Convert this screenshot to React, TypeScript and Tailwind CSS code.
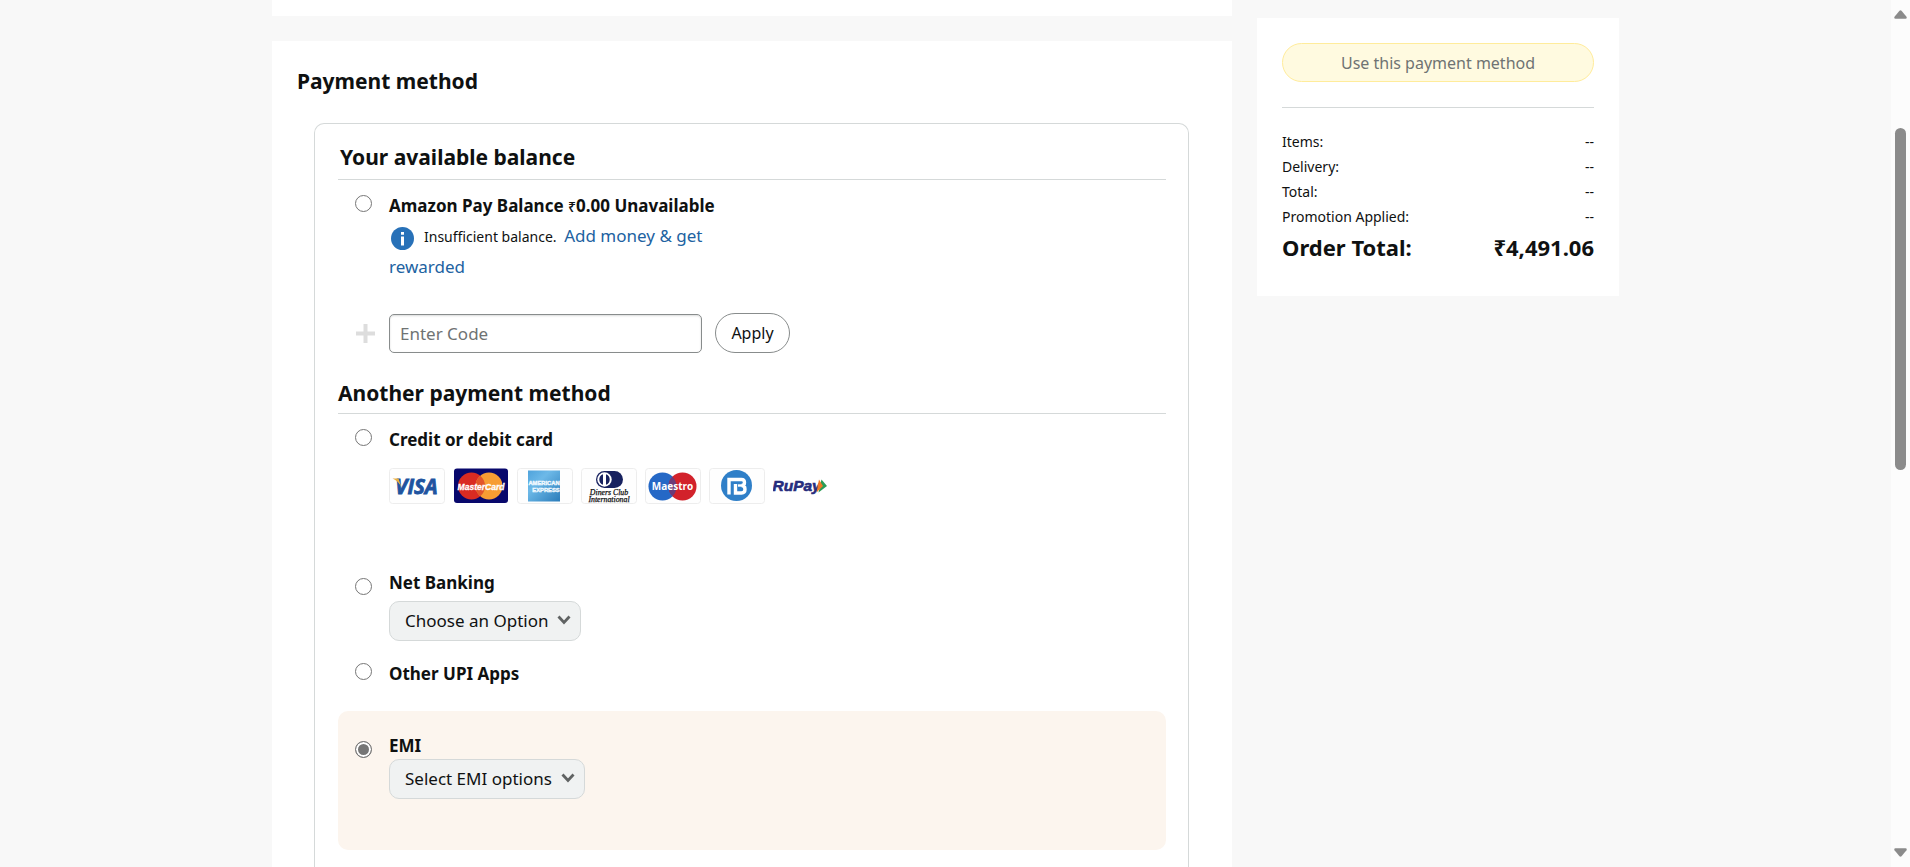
import type { ReactNode } from "react";

const summaryRows = ["Items:", "Delivery:", "Total:", "Promotion Applied:"];

type OptionProps = {
  id: string;
  label: ReactNode;
  checked?: boolean;
  radioClass: string;
  className: string;
  children?: ReactNode;
};

function Option({ id, label, checked = false, radioClass, className, children }: OptionProps) {
  return (
    <div className={"flex items-start pl-[17px] " + className}>
      <div className={"flex w-[34px] shrink-0 " + radioClass}>
        <input
          id={id}
          type="radio"
          name="payment"
          defaultChecked={checked}
          className="m-0 size-[17px] appearance-none rounded-full border border-[#767676] bg-white checked:bg-[#767676] checked:shadow-[inset_0_0_0_2px_white]"
        />
      </div>
      <div className="min-w-0 flex-1">
        <label htmlFor={id} className="block pt-0.5 text-[17px] leading-[22px] font-bold">
          {label}
        </label>
        {children}
      </div>
    </div>
  );
}

function Dropdown({ id, label, option, className }: { id: string; label: string; option: string; className: string }) {
  return (
    <div className={"relative h-10 " + className}>
      <select
        id={id}
        aria-label={label}
        className="h-10 w-full appearance-none rounded-[10px] border border-[#d5d9d9] bg-[#f0f2f2] pr-8 pl-[15px] text-[17px] text-[#0f1111]"
      >
        <option>{option}</option>
      </select>
      <svg
        viewBox="0 0 14 10"
        className="pointer-events-none absolute top-[14px] right-[10px] h-[10px] w-[14px]"
        aria-hidden="true"
      >
        <path d="M1.500 1.500L7 7.400l5.500-5.900" fill="none" stroke="#606363" strokeWidth="2.800" />
      </svg>
    </div>
  );
}

function CardFrame({ name, framed = true, children }: { name: string; framed?: boolean; children: ReactNode }) {
  return (
    <svg viewBox="0 0 56 36" className="h-9 w-14" role="img" aria-label={name}>
      {framed && <rect x=".5" y=".5" width="55" height="35" rx="3" fill="#fefefe" stroke="#ededed" />}
      {children}
    </svg>
  );
}

function CardLogos() {
  return (
    <div className="mt-[17px] flex gap-2">
      <CardFrame name="Visa">
        <text x="27.500" y="25.500" textAnchor="middle" fontFamily="Open Sans, sans-serif" fontSize="20.500" fontWeight="700" fontStyle="italic" fill="#20539f" stroke="#20539f" strokeWidth=".8">
          VISA
        </text>
        <path d="M3.500 10.500h6l3 9C10.500 15 7.500 12.500 3.500 10.500z" fill="#e8ae3f" />
      </CardFrame>
      <CardFrame name="MasterCard" framed={false}>
        <rect x="1" y=".5" width="54" height="34.500" rx="3" fill="#08086c" />
        <circle cx="18.500" cy="18" r="13.500" fill="#d92b22" />
        <circle cx="36" cy="18" r="13.500" fill="#f79d33" />
        <path d="M27.250 7.700a13.500 13.500 0 0 1 0 20.600 13.500 13.500 0 0 1 0-20.600z" fill="#e2552a" />
        <text x="28" y="21.500" textAnchor="middle" fontFamily="Liberation Sans, sans-serif" fontSize="8.500" fontWeight="700" fontStyle="italic" fill="#fff" stroke="#fff" strokeWidth=".3">
          MasterCard
        </text>
      </CardFrame>
      <CardFrame name="American Express">
        <defs>
          <linearGradient id="amex" x1="0" y1="0" x2="1" y2="1">
            <stop offset="0" stopColor="#4fa3dc" />
            <stop offset=".35" stopColor="#6db9e8" />
            <stop offset="1" stopColor="#2a7cba" />
          </linearGradient>
        </defs>
        <rect x="11" y="2.500" width="32" height="31" fill="url(#amex)" />
        <text x="27" y="17" textAnchor="middle" fontFamily="Liberation Sans, sans-serif" fontSize="5.800" fontWeight="700" fill="#f1f9ff" stroke="#f1f9ff" strokeWidth=".4">
          AMERICAN
        </text>
        <text x="29" y="24" textAnchor="middle" fontFamily="Liberation Sans, sans-serif" fontSize="5.800" fontWeight="700" fill="#f1f9ff" stroke="#f1f9ff" strokeWidth=".4">
          EXPRESS
        </text>
      </CardFrame>
      <CardFrame name="Diners Club International">
        <rect x="15" y="3" width="27" height="17" rx="8.500" fill="#17215f" />
        <circle cx="23.500" cy="11.500" r="7.200" fill="#fff" />
        <path d="M22 6.300a5.500 5.500 0 0 0 0 10.400zM25 6.300a5.500 5.500 0 0 1 0 10.400z" fill="#17215f" />
        <text x="28" y="27" textAnchor="middle" fontFamily="Liberation Serif, serif" fontSize="7.800" fontStyle="italic" fill="#111" stroke="#111" strokeWidth=".25">
          Diners Club
        </text>
        <text x="28" y="33.500" textAnchor="middle" fontFamily="Liberation Serif, serif" fontSize="7.800" fontStyle="italic" fill="#111" stroke="#111" strokeWidth=".25">
          International
        </text>
      </CardFrame>
      <CardFrame name="Maestro">
        <circle cx="17.500" cy="18.500" r="14" fill="#2568c6" />
        <circle cx="37.500" cy="18.500" r="14" fill="#d2222b" />
        <path d="M27.500 8.700a14 14 0 0 1 0 19.600 14 14 0 0 1 0-19.600z" fill="#6c3a78" />
        <text x="27.500" y="22" textAnchor="middle" fontFamily="Open Sans, sans-serif" fontSize="10" fontWeight="700" fill="#fff">
          Maestro
        </text>
      </CardFrame>
      <CardFrame name="BHIM">
        <circle cx="27.500" cy="17.500" r="15.500" fill="#2f7fc8" />
        <path
          d="M20 26.500V11.500H32.500q3 0 3 3T32.500 17.500q3.500 0 3.500 3.700T32.500 25H26.500V16"
          fill="none"
          stroke="#fff"
          strokeWidth="3.400"
        />
        <path d="M29 17.500h4" stroke="#fff" strokeWidth="2.400" />
      </CardFrame>
      <CardFrame name="RuPay" framed={false}>
        <text x="-.500" y="23" fontFamily="Liberation Sans, sans-serif" fontSize="15.500" fontWeight="700" fontStyle="italic" fill="#262d7d" stroke="#262d7d" strokeWidth=".6">
          RuPay
        </text>
        <path d="M48.500 11.500l5.500 6.500-8.500 6.500z" fill="#2a9d56" />
        <path d="M46 11.500l4 6.500-6.500 6.500z" fill="#f07a26" />
      </CardFrame>
    </div>
  );
}

function ScrollRail() {
  return (
    <div className="flex w-[19px] shrink-0 flex-col items-center bg-[#fcfcfc] py-[10px]" aria-hidden="true">
      <svg viewBox="0 0 13 9" className="h-[9px] w-[13px]">
        <path d="M5.500 .8q1-.9 2 0l5 6q.8 1.800-1 2h-10q-1.800-.2-1-2z" fill="#8b8b8b" />
      </svg>
      <div className="mt-[109px] h-[342px] w-[11px] rounded-full bg-[#8b8b8b]" />
      <svg viewBox="0 0 13 9" className="mt-auto h-[9px] w-[13px]">
        <path d="M5.500 8.200q1 .9 2 0l5-6q.8-1.800-1-2h-10q-1.800.2-1 2z" fill="#8b8b8b" />
      </svg>
    </div>
  );
}

export default function App() {
  return (
    <div className="flex min-h-screen bg-[#f8f8f8] font-['Noto_Sans',sans-serif] text-[#0f1111]">
      <main className="mx-auto flex w-full max-w-[1347px] gap-[25px]">
        <div className="flex min-w-0 flex-1 flex-col gap-[25px]">
          <div className="h-4 bg-white" />
          <section className="flex flex-1 flex-col bg-white pr-[43px] pl-[42px]">
            <h1 className="-ml-[17px] pt-[26px] pb-7 text-[21px] leading-7 font-bold">Payment method</h1>
            <div className="flex-1 rounded-t-[10px] border border-b-0 border-[#d5d9d9] pr-[22px] pl-[23px]">
              <h2 className="px-0.5 pt-[19px] pb-2 text-[21px] leading-7 font-bold">Your available balance</h2>
              <hr className="border-[#d5d9d9]" />
              <Option
                id="pay-balance"
                className="pt-[13px]"
                radioClass="pt-0.5"
                label={
                  <>
                    Amazon Pay Balance <span className="text-[14px] leading-none font-medium">₹</span>0.00 Unavailable
                  </>
                }
              >
                <p className="mt-1 w-80 text-[14px] leading-[30px]">
                  <svg viewBox="0 0 23 23" className="mr-[10px] ml-0.5 inline-block size-[23px]" aria-hidden="true">
                    <circle cx="11.500" cy="11.500" r="11.500" fill="#2871b8" />
                    <path d="M10 9.500h3v9h-3zM10 5h3v2.800h-3z" fill="#fff" />
                  </svg>
                  Insufficient balance.{" "}
                  <a href="#add-money" className="ml-1 text-[17px] text-[#2162a1]">
                    Add money &amp; get rewarded
                  </a>
                </p>
              </Option>
              <form className="mt-[30px] flex h-10 items-center pl-[18px]" onSubmit={(e) => e.preventDefault()}>
                <div className="w-[33px] shrink-0">
                  <svg viewBox="0 0 19 19" className="size-[19px]" aria-hidden="true">
                    <path d="M9.500 0v19M0 9.500h19" stroke="#dddddd" strokeWidth="4" />
                  </svg>
                </div>
                <input
                  type="text"
                  aria-label="Enter Code"
                  placeholder="Enter Code"
                  className="h-[39px] w-[313px] rounded-[5px] border border-[#888c8c] bg-white px-[10px] text-[17px] shadow-[inset_0_1px_2px_rgba(15,17,17,0.15)] placeholder:text-[#6f7373]"
                />
                <button type="submit" className="ml-[13px] h-10 w-[75px] rounded-full border border-[#888c8c] bg-white text-[16px]">
                  Apply
                </button>
              </form>
              <h2 className="pt-[26px] pb-[6px] text-[21px] leading-7 font-bold">Another payment method</h2>
              <hr className="border-[#d5d9d9]" />
              <Option id="card" className="pt-[13px]" radioClass="pt-0.5" label="Credit or debit card">
                <CardLogos />
              </Option>
              <Option id="net-banking" className="mt-[66px]" radioClass="pt-2" label="Net Banking">
                <Dropdown id="bank" label="Bank" option="Choose an Option" className="mt-[7px] w-48" />
              </Option>
              <Option id="upi" className="mt-5" radioClass="pt-0.5" label="Other UPI Apps" />
              <Option
                id="emi"
                checked
                className="mt-[26px] rounded-[10px] bg-[#fcf5ee] pt-[22px] pb-[51px]"
                radioClass="pt-2"
                label="EMI"
              >
                <Dropdown id="emi-plan" label="EMI plan" option="Select EMI options" className="mt-0.5 w-49" />
              </Option>
            </div>
          </section>
        </div>
        <aside className="mt-[18px] w-[362px] shrink-0 self-start bg-white px-[25px] pt-[25px] pb-[31px]">
          <button
            type="button"
            className="block h-[39px] w-full rounded-full border border-[#ffec9b] bg-[#fffae0] text-[16px] text-[#6f7373]"
          >
            Use this payment method
          </button>
          <hr className="mt-[25px] mb-[21px] border-[#d5d9d9]" />
          <dl>
            {summaryRows.map((row) => (
              <div key={row} className="flex justify-between text-[14px] leading-[25px]">
                <dt>{row}</dt>
                <dd>--</dd>
              </div>
            ))}
            <div className="flex justify-between text-[22px] leading-9 font-bold">
              <dt>Order Total:</dt>
              <dd>₹4,491.06</dd>
            </div>
          </dl>
        </aside>
      </main>
      <ScrollRail />
    </div>
  );
}
